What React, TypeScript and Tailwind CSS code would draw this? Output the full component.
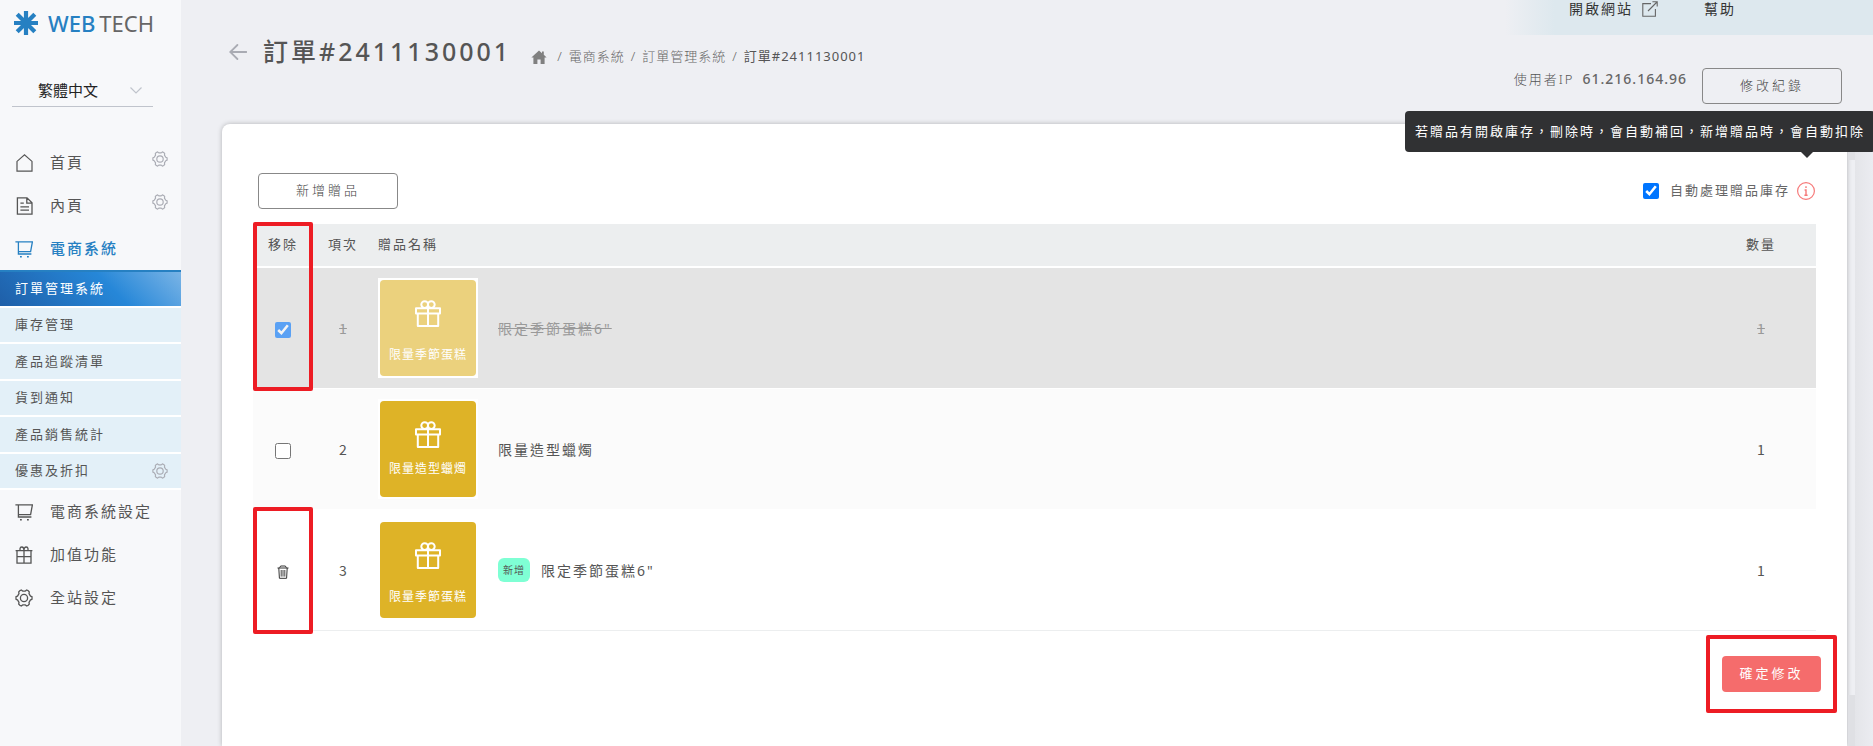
import React from "react";

const font = "font-['Noto_Sans','Noto_Sans_CJK_TC',sans-serif]";

type IconProps = { className?: string };

function GearIcon({ className }: IconProps) {
  return (
    <svg viewBox="0 0 18 18" className={className} fill="none" stroke="currentColor" strokeWidth="1.3" strokeLinejoin="round" aria-hidden="true">
      <path d="M4.9 1.6 L6.3 1 L7.6 2.1 H10.4 L11.7 1 L13.1 1.6 L14.3 3 L14 4.6 L15.5 7.1 L17 7.7 V10.3 L15.5 10.9 L14 13.4 L14.3 15 L13.1 16.4 L11.7 17 L10.4 15.9 H7.6 L6.3 17 L4.9 16.4 L3.7 15 L4 13.4 L2.5 10.9 L1 10.3 V7.7 L2.5 7.1 L4 4.6 L3.7 3 Z" />
      <circle cx="9" cy="9" r="3.6" />
    </svg>
  );
}

function HouseIcon({ className }: IconProps) {
  return (
    <svg viewBox="0 0 18 18" className={className} fill="none" stroke="currentColor" strokeWidth="1.2" aria-hidden="true">
      <path d="M2 17.2 V7.4 L9.5 0.9 L17 7.4 V17.2 Z" />
    </svg>
  );
}

function PageIcon({ className }: IconProps) {
  return (
    <svg viewBox="0 0 18 18" className={className} fill="none" stroke="currentColor" strokeWidth="1.3" aria-hidden="true">
      <path d="M2.4 0.8 H12 L17 5.8 V17.2 H2.4 Z M11.8 1 V6.2 H16.8 M5.4 6.2 H8.8 M5.4 9.8 H14 M5.4 13.2 H14" />
    </svg>
  );
}

function CartIcon({ className }: IconProps) {
  return (
    <svg viewBox="0 0 18 18" className={className} fill="none" stroke="currentColor" strokeWidth="1.3" aria-hidden="true">
      <path d="M0.4 1.8 H17.4 L15.6 11.6 H3.4 V1.8 M3.4 11.4 V14 H16.4" />
      <path d="M5 16.8 H6.8 M12 16.8 H13.8" strokeWidth="1.6" />
    </svg>
  );
}

function GiftBoxIcon({ className }: IconProps) {
  return (
    <svg viewBox="0 0 18 18" className={className} fill="none" stroke="currentColor" strokeWidth="1.3" aria-hidden="true">
      <path d="M0.6 4.6 H17.4 M2 4.6 V17.2 H16 V4.6 M9 4.6 V17.2 M2 10.6 H16 M5 4.4 V2.6 Q5.2 1 6.8 1 Q9 1 9 4.4 Q9 1 11.2 1 Q12.8 1 13 2.6 V4.4" />
    </svg>
  );
}

function TrashIcon({ className }: IconProps) {
  return (
    <svg viewBox="0 0 12 14" className={className} fill="none" stroke="currentColor" strokeWidth="1" aria-hidden="true">
      <path d="M0.5 3 H11.5 M2.6 2.8 L3.6 1 H8.4 L9.4 2.8 M1.8 3 L2.4 13.3 H9.6 L10.2 3" />
      <path d="M4.2 5 V11.6 M6 5 V11.6 M7.8 5 V11.6" strokeWidth="0.9" />
    </svg>
  );
}

function Logo() {
  return (
    <a href="#" className="flex items-center gap-[10px] pl-[14px] pt-2">
      <svg viewBox="0 0 24 24" className="size-6" stroke="#2680c2" strokeWidth="4.2" aria-hidden="true">
        <path d="M12 0 V24 M0 12 H24 M3.2 3.2 L20.8 20.8 M20.8 3.2 L3.2 20.8" />
      </svg>
      <span className="flex gap-1 text-[22px] leading-[30px] text-[#666]">
        <span className="font-medium text-[#2680c2]">WEB</span>
        <span>TECH</span>
      </span>
    </a>
  );
}

const subItems = [
  { label: "庫存管理" },
  { label: "產品追蹤清單" },
  { label: "貨到通知" },
  { label: "產品銷售統計" },
  { label: "優惠及折扣", gear: true },
];

type MenuItemProps = {
  icon: React.ReactNode;
  label: string;
  gear?: boolean;
  active?: boolean;
};

function MenuItem({ icon, label, gear, active }: MenuItemProps) {
  return (
    <a
      href="#"
      className={`flex h-[43px] items-center pl-[15px] pr-[13px] text-[15px] tracking-[2px] ${
        active ? "font-medium text-[#2680c2]" : "text-[#555]"
      }`}
    >
      {icon}
      <span className="ml-[17px] flex-1">{label}</span>
      {gear && <GearIcon className="mb-[7px] size-4 text-[#aaacb4]" />}
    </a>
  );
}

function Sidebar() {
  return (
    <aside className="w-[181px] shrink-0 bg-[#f7f8fa]">
      <Logo />
      <button type="button" className="ml-3 mt-[38px] flex h-[31px] w-[141px] items-center justify-between border-b border-[#c0c4cc] pb-[2px] pl-[26px] pr-[11px] text-[15px] text-[#222]">
        繁體中文
        <svg viewBox="0 0 12 7" className="h-[7px] w-3" fill="none" stroke="#c0c4cc" strokeWidth="1.2" aria-hidden="true">
          <path d="M0.5 0.5 L6 6 L11.5 0.5" />
        </svg>
      </button>
      <nav className="mt-[34px]">
        <MenuItem icon={<HouseIcon className="size-[18px]" />} label="首頁" gear />
        <MenuItem icon={<PageIcon className="size-[18px]" />} label="內頁" gear />
        <MenuItem icon={<CartIcon className="size-[18px]" />} label="電商系統" active />
        <ul className="grid h-[220px] grid-rows-[38px_repeat(5,1fr)] text-[13px] tracking-[2px] text-[#555]">
          <li className="border-b-2 border-white">
            <a href="#" className="flex h-full items-center border-t-2 border-[#2680c2] bg-[linear-gradient(45deg,#1f5fa8_0%,#2687d8_60%,#7ab4e6_100%)] pl-[15px] text-white">
              訂單管理系統
            </a>
          </li>
          {subItems.map((item) => (
            <li key={item.label} className="border-b-2 border-white bg-[#e3f0f8]">
              <a href="#" className="flex h-full items-center justify-between pl-[15px] pr-[13px]">
                {item.label}
                {item.gear && <GearIcon className="size-4 text-[#aaacb4]" />}
              </a>
            </li>
          ))}
        </ul>
        <MenuItem icon={<CartIcon className="size-[18px]" />} label="電商系統設定" />
        <MenuItem icon={<GiftBoxIcon className="size-[18px]" />} label="加值功能" />
        <MenuItem icon={<GearIcon className="size-[18px]" />} label="全站設定" />
      </nav>
    </aside>
  );
}

function TopBar() {
  return (
    <div className="flex h-[35px] justify-end">
      <div className="flex w-[368px] items-start bg-[linear-gradient(90deg,#eeeff3_0px,#dde8ee_50px)] pl-16 text-[14px] leading-[18px] tracking-[2px] text-[#333]">
        <a href="#" className="flex w-[135px] items-center gap-[9px]">
          開啟網站
          <svg viewBox="0 0 16 16" className="size-4" fill="none" stroke="#666" strokeWidth="1.1" aria-hidden="true">
            <path d="M9 2.6 H0.8 V15.2 H13.4 V8 M6 10 L15 1 M10.4 0.8 H15.2 V5.6" />
          </svg>
        </a>
        <a href="#">幫助</a>
      </div>
    </div>
  );
}

function PageHeader() {
  return (
    <header className="flex h-[89px] justify-between pl-12 pr-[31px]">
      <div className="flex h-[34px] items-center">
        <a href="#" aria-label="返回">
          <svg viewBox="0 0 18 16" className="h-4 w-[18px]" fill="none" stroke="#a9abb3" strokeWidth="1.8" strokeLinecap="round" aria-hidden="true">
            <path d="M8.4 1 L1.2 8 L8.4 15 M1.4 8 H17.4" />
          </svg>
        </a>
        <h1 className="ml-4 text-[25px] font-medium tracking-[3px] text-[#555]">訂單#2411130001</h1>
        <nav className="ml-5 mt-[10px] flex items-center gap-[6px] text-[13px] font-light tracking-[1px] text-[#666]">
          <a href="#" aria-label="首頁" className="mr-1">
            <svg viewBox="0 0 16 14" className="h-[14px] w-4" fill="#808080" aria-hidden="true">
              <path d="M8 0.4 L0.4 7.4 H2.4 V14 H6.4 V9.4 H9.6 V14 H13.6 V7.4 H15.6 L12.8 4.8 V1.4 H11 V3.2 Z" />
            </svg>
          </a>
          <span>/</span>
          <a href="#">電商系統</a>
          <span>/</span>
          <a href="#">訂單管理系統</a>
          <span>/</span>
          <span className="font-normal text-[#555]">訂單#2411130001</span>
        </nav>
      </div>
      <div className="flex h-[88px] items-start">
        <div className="mt-[34px] flex items-center text-[#555]">
          <span className="text-[13px] font-light leading-5 tracking-[2px]">使用者IP</span>
          <span className="ml-2 text-[14px] font-medium leading-5 tracking-[1px] text-[#666]">61.216.164.96</span>
        </div>
        <OutlineButton className="ml-[15px] mt-[33px]">修改紀錄</OutlineButton>
      </div>
    </header>
  );
}

function OutlineButton({ children, className = "" }: { children: React.ReactNode; className?: string }) {
  return (
    <button type="button" className={`h-9 w-[140px] rounded border border-[#888] text-[13px] font-light tracking-[3px] text-[#444] ${className}`}>
      {children}
    </button>
  );
}

function GiftPicture({ label, low, faded }: { label: string; low?: boolean; faded?: boolean }) {
  return (
    <div className="size-[100px] bg-white p-[2px]">
      <div className={`flex h-full flex-col items-center rounded bg-[#deb327] pt-5 text-white ${faded ? "opacity-60" : ""}`}>
        <svg viewBox="0 0 26 27" className="h-[27px] w-[26px]" fill="none" stroke="currentColor" strokeWidth="2" strokeLinejoin="round" aria-hidden="true">
          <path d="M1 8.2 H25 V13.4 H1 Z M2.8 13.4 V26 H23.2 V13.4 M13 7 V26" />
          <circle cx="9.7" cy="4.6" r="3.4" />
          <circle cx="16.3" cy="4.6" r="3.4" />
        </svg>
        <span className={`text-[12px] leading-4 tracking-[1px] ${low ? "mt-5" : "mt-[13px]"}`}>{label}</span>
      </div>
    </div>
  );
}

const rows = [
  { id: 1, picture: "限量季節蛋糕", name: '限定季節蛋糕6"', qty: 1, removed: true },
  { id: 2, picture: "限量造型蠟燭", name: "限量造型蠟燭", qty: 1 },
  { id: 3, picture: "限量季節蛋糕", name: '限定季節蛋糕6"', qty: 1, added: true },
];

function GiftTable() {
  return (
    <table className="mt-[15px] w-full table-fixed border-separate border-spacing-0 text-[14px] text-[#555]">
      <thead className="text-[13px] tracking-[2px]">
        <tr className="bg-[#eceeef] [&>th]:h-11 [&>th]:border-b-2 [&>th]:border-white [&>th]:font-normal">
          <th className="relative z-10 w-[60px]">
            移除
            <div className="pointer-events-none absolute -top-[2px] left-0 h-[169px] w-[60px] rounded-xs border-4 border-[#ed1c24]" />
          </th>
          <th className="w-[60px]">項次</th>
          <th className="pl-[5px] text-left">贈品名稱</th>
          <th className="w-[110px]">數量</th>
        </tr>
      </thead>
      <tbody>
        {rows.map((row) => {
          const tone = row.removed
            ? "bg-[#e4e4e4] text-[#999] [&>td]:border-white"
            : row.added
              ? "[&>td]:border-[#eceeef]"
              : "bg-[#fbfbfb] [&>td]:border-white";
          const strike = row.removed ? "line-through" : "";
          const digits = "text-center font-['Noto_Sans_CJK_TC',sans-serif]";
          return (
            <tr key={row.id} className={`${tone} [&>td]:h-[121px] [&>td]:border-b`}>
              <td className="relative text-center">
                {row.added ? (
                  <button type="button" aria-label="刪除" className="align-middle text-[#333]">
                    <TrashIcon className="h-[14px] w-3" />
                  </button>
                ) : (
                  <input
                    type="checkbox"
                    aria-label={`移除 ${row.name}`}
                    defaultChecked={row.removed}
                    className={`size-4 align-middle ${row.removed ? "opacity-60" : ""}`}
                  />
                )}
                {row.added && (
                  <div className="pointer-events-none absolute -top-[3px] left-0 h-[127px] w-[60px] rounded-xs border-4 border-[#ed1c24]" />
                )}
              </td>
              <td className={`${digits} ${strike}`}>{row.id}</td>
              <td className="pl-[5px]">
                <div className="flex items-center">
                  <GiftPicture label={row.picture} low={row.id !== 2} faded={row.removed} />
                  {row.added && (
                    <span className="ml-5 -mr-[9px] flex h-6 w-8 items-center justify-center rounded-md bg-[#7fffd4] text-[10px] tracking-[1px]">
                      新增
                    </span>
                  )}
                  <span className={`ml-5 tracking-[2px] ${strike}`}>{row.name}</span>
                </div>
              </td>
              <td className={`${digits} ${strike}`}>{row.qty}</td>
            </tr>
          );
        })}
      </tbody>
    </table>
  );
}

function StockOption() {
  return (
    <div className="relative flex items-center">
      <label className="flex items-center gap-[11px] text-[13px] tracking-[2px] text-[#666]">
        <input type="checkbox" defaultChecked className="size-4" />
        自動處理贈品庫存
      </label>
      <svg viewBox="0 0 18 18" className="ml-[7px] size-[18px]" fill="none" stroke="#f67a7a" strokeWidth="1.2" aria-hidden="true">
        <circle cx="9" cy="9" r="8.4" />
        <path d="M9 4.2 V6 M7.6 8 H9 V13 M7.4 13.2 H10.6" strokeWidth="1.4" />
      </svg>
      <div role="tooltip" className="absolute -right-[60px] bottom-[49px] z-20 h-[41px] whitespace-nowrap rounded bg-[#303133] px-[10px] text-[13px] leading-[41px] tracking-[2px] text-white">
        若贈品有開啟庫存，刪除時，會自動補回，新增贈品時，會自動扣除
        <span className="absolute right-[62px] top-full border-x-[6px] border-t-[6px] border-x-transparent border-t-[#303133]" />
      </div>
    </div>
  );
}

function ScrollTrack() {
  return (
    <div className="flex">
      <div className="ml-px flex w-[7px] flex-col">
        <div className="h-9 bg-[#dfe0e4]" />
        <div className="flex-1" />
        <div className="h-[51px] bg-[#dfe0e4]" />
      </div>
      <div className="w-[18px] bg-[linear-gradient(90deg,#e4e5e9,#ebecf1)]" />
    </div>
  );
}

export default function App() {
  return (
    <div className={`flex min-h-screen overflow-hidden bg-[#eeeff3] ${font}`}>
      <Sidebar />
      <div className="flex min-w-0 flex-1 flex-col">
        <TopBar />
        <PageHeader />
        <div className="flex flex-1 pl-[41px]">
          <main className="min-w-0 flex-1 rounded-tl-lg bg-white px-[31px] pt-[49px] shadow-[0_0_5px_rgba(0,0,0,0.25)]">
            <div className="flex items-center justify-between pl-[5px] pr-px">
              <OutlineButton>新增贈品</OutlineButton>
              <StockOption />
            </div>
            <GiftTable />
            <div className="-mr-[21px] mt-1 flex justify-end">
              <div className="rounded-xs border-4 border-[#ed1c24] px-3 py-[17px]">
                <button type="button" className="h-9 w-[99px] rounded bg-[#f56c6c] text-[13px] tracking-[3px] text-white">
                  確定修改
                </button>
              </div>
            </div>
          </main>
          <ScrollTrack />
        </div>
      </div>
    </div>
  );
}
